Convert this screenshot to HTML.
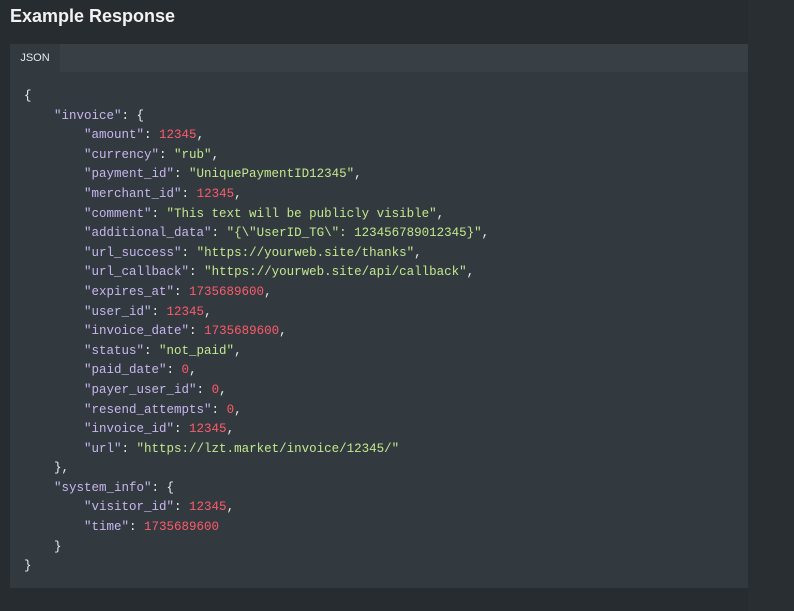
<!DOCTYPE html>
<html><head><meta charset="utf-8"><style>
html,body{margin:0;padding:0;}
body{width:794px;height:611px;background:#262c30;position:relative;overflow:hidden;font-family:"Liberation Sans",sans-serif;}
.side{position:absolute;left:748px;top:0;width:46px;height:611px;background:#282e32;}
h1{position:absolute;left:10px;top:6px;margin:0;font-size:18px;font-weight:bold;color:#f2f2f2;}
.box{position:absolute;left:10px;top:44px;width:738px;height:544px;background:#323a40;}
.tabs{height:28px;background:#394045;}
.tab{width:50px;height:28px;background:#323a40;color:#e8e8e8;font-size:11px;line-height:28px;text-align:center;}
pre{margin:0;position:absolute;left:14px;top:43px;font-family:"Liberation Mono",monospace;font-size:12.5px;line-height:19.6px;color:#eeeeee;}
.k{color:#c8b6ef}.s{color:#c3e88d}.n{color:#ff5a6a}
</style></head><body>
<div class="side"></div>
<h1>Example Response</h1>
<div class="box"><div class="tabs"><div class="tab">JSON</div></div>
<pre>{
    <span class="k">"invoice"</span>: {
        <span class="k">"amount"</span>: <span class="n">12345</span>,
        <span class="k">"currency"</span>: <span class="s">"rub"</span>,
        <span class="k">"payment_id"</span>: <span class="s">"UniquePaymentID12345"</span>,
        <span class="k">"merchant_id"</span>: <span class="n">12345</span>,
        <span class="k">"comment"</span>: <span class="s">"This text will be publicly visible"</span>,
        <span class="k">"additional_data"</span>: <span class="s">"{\"UserID_TG\": 123456789012345}"</span>,
        <span class="k">"url_success"</span>: <span class="s">"https://yourweb.site/thanks"</span>,
        <span class="k">"url_callback"</span>: <span class="s">"https://yourweb.site/api/callback"</span>,
        <span class="k">"expires_at"</span>: <span class="n">1735689600</span>,
        <span class="k">"user_id"</span>: <span class="n">12345</span>,
        <span class="k">"invoice_date"</span>: <span class="n">1735689600</span>,
        <span class="k">"status"</span>: <span class="s">"not_paid"</span>,
        <span class="k">"paid_date"</span>: <span class="n">0</span>,
        <span class="k">"payer_user_id"</span>: <span class="n">0</span>,
        <span class="k">"resend_attempts"</span>: <span class="n">0</span>,
        <span class="k">"invoice_id"</span>: <span class="n">12345</span>,
        <span class="k">"url"</span>: <span class="s">"https://lzt.market/invoice/12345/"</span>
    },
    <span class="k">"system_info"</span>: {
        <span class="k">"visitor_id"</span>: <span class="n">12345</span>,
        <span class="k">"time"</span>: <span class="n">1735689600</span>
    }
}</pre></div>
</body></html>
